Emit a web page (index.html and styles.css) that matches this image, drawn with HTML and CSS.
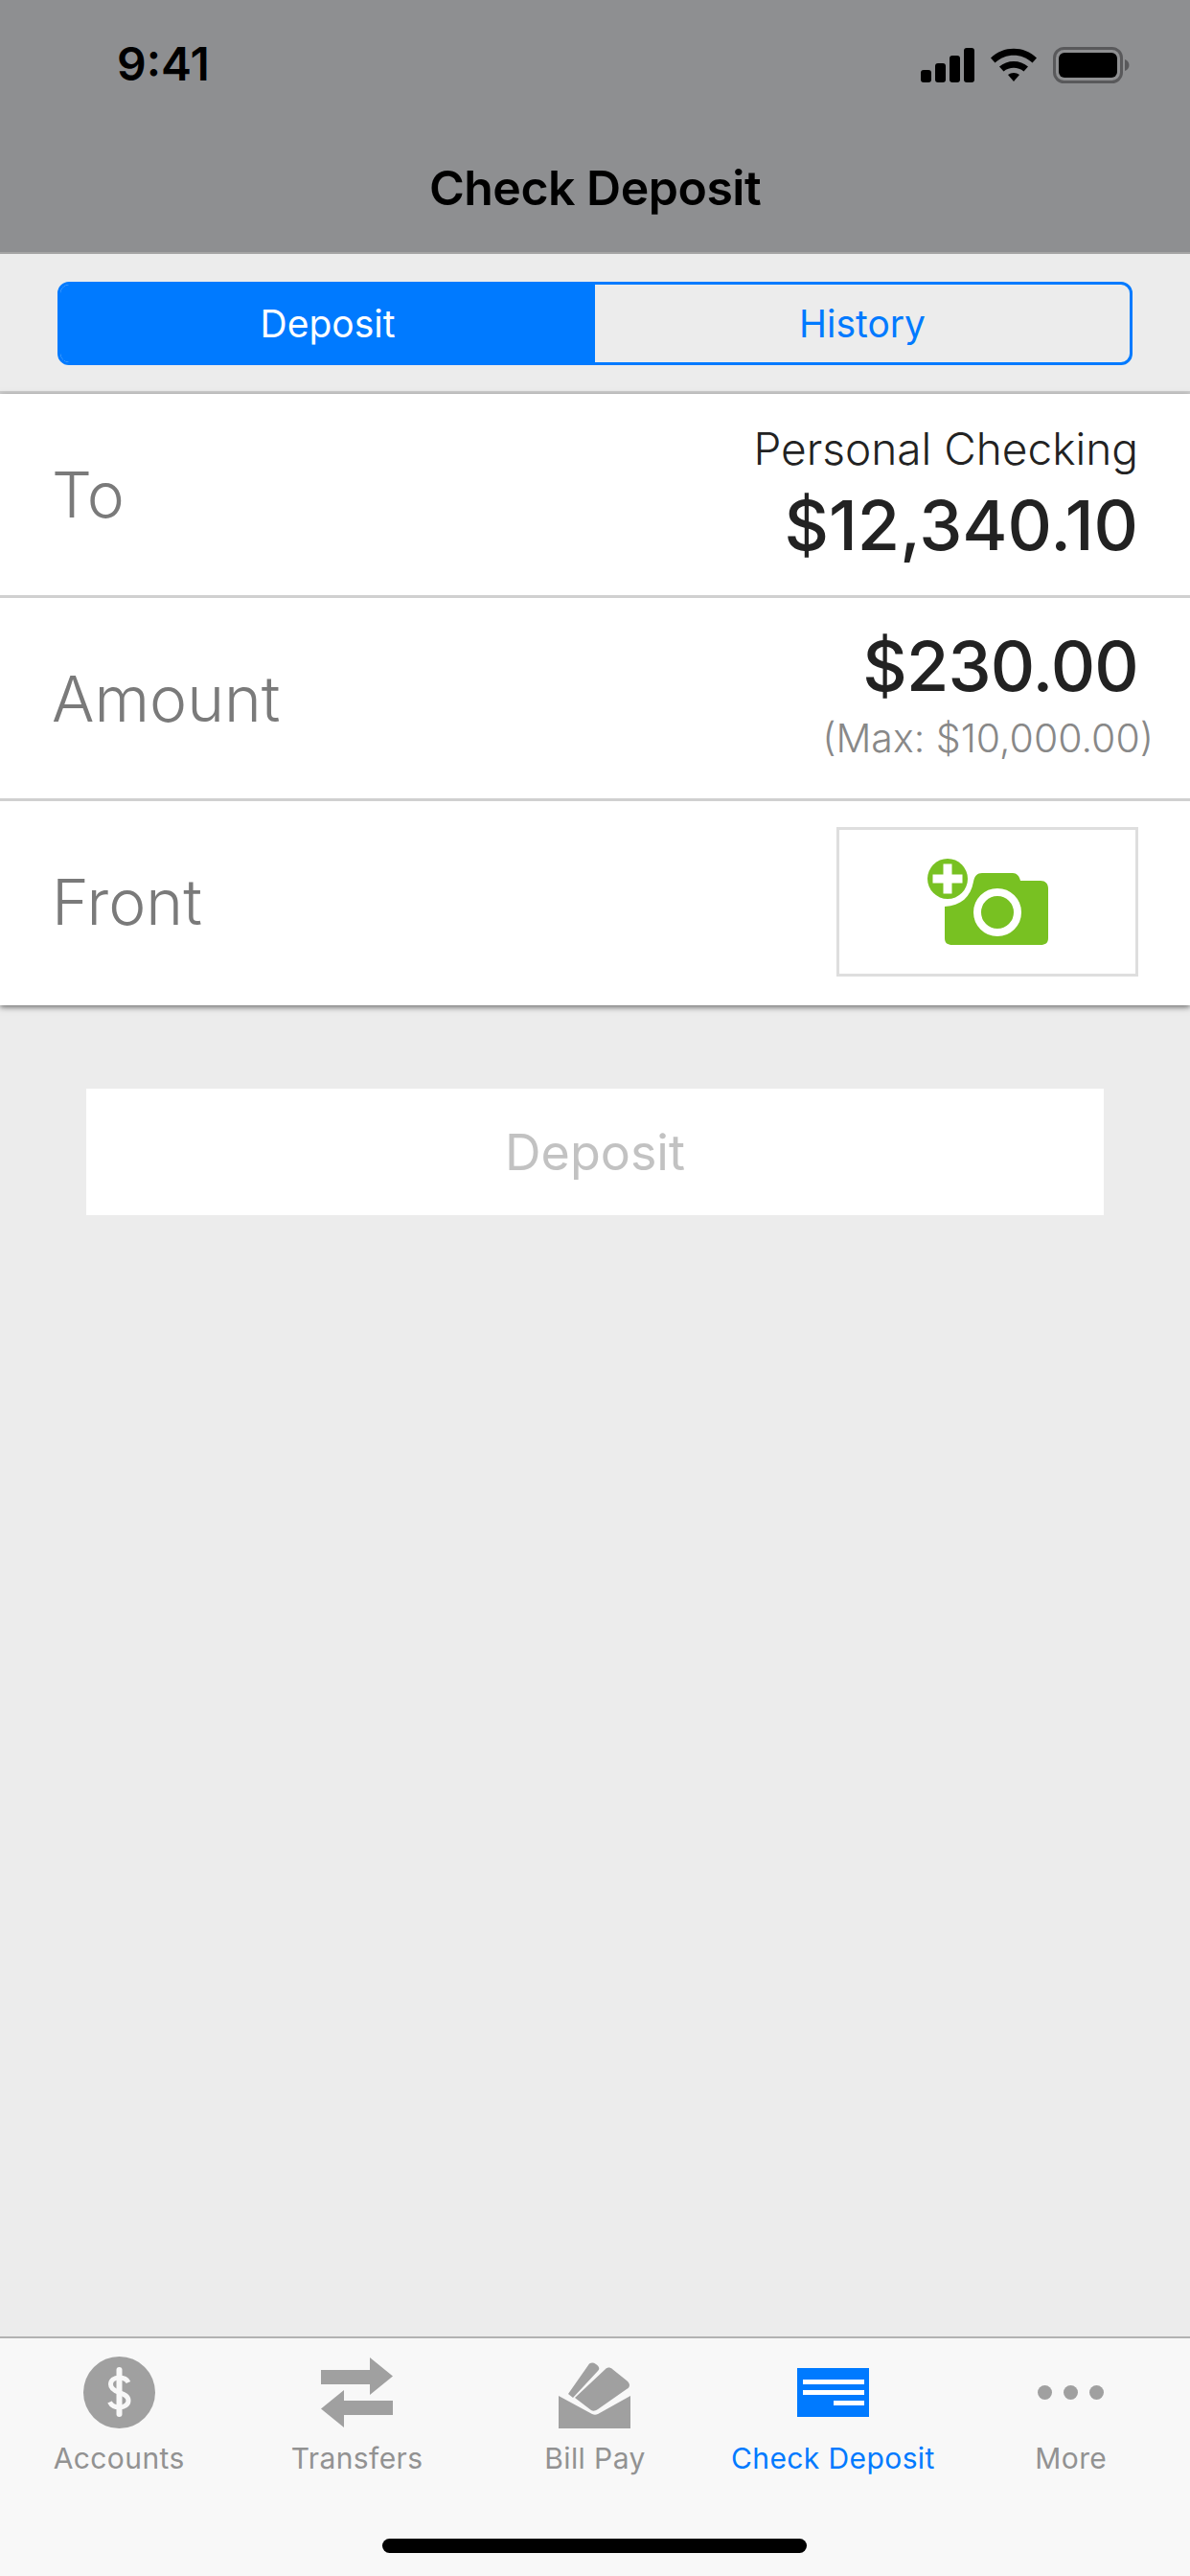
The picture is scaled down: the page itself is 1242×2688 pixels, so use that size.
FILE: index.html
```html
<!DOCTYPE html>
<html>
<head>
    <title>Check Deposit</title>
    <link rel="stylesheet" href="styles.css">
</head>
<body>
    <header class="top-bar">
        <div class="status-bar">
            <span class="clock">9:41</span>
            <div class="status-icons">
                <svg class="signal" width="56" height="36" viewBox="0 0 56 36">
                    <rect x="0" y="23" width="11" height="13" rx="3"/>
                    <rect x="15" y="16" width="11" height="20" rx="3"/>
                    <rect x="30" y="8" width="11" height="28" rx="3"/>
                    <rect x="45" y="0" width="11" height="36" rx="3"/>
                </svg>
                <svg class="wifi" width="50" height="36" viewBox="0 0 50 36">
                    <path d="M1 10.5 C14 -2.5 36 -2.5 49 10.5 L44.5 15.5 C33.5 5 16.5 5 5.500 15.500 Z"/>
                    <path d="M10 19.500 C18 12 32 12 40 19.500 L35.500 24.500 C29.500 19.500 20.500 19.500 14.500 24.500 Z"/>
                    <path d="M19 28 C22.500 25.300 27.500 25.300 31 28 L25 35 Z"/>
                </svg>
                <svg class="battery" width="80" height="38" viewBox="0 0 80 38">
                    <rect x="1.500" y="1.500" width="70" height="35" rx="10" fill="none" stroke="#59595b" stroke-width="3"/>
                    <rect x="6" y="6" width="61" height="26" rx="6"/>
                    <path d="M75 13 C78 14 79.500 16.500 79.500 19 C79.500 21.500 78 24 75 25 Z" fill="#59595b"/>
                </svg>
            </div>
        </div>
        <h1 class="title">Check Deposit</h1>
    </header>

    <div class="segment-wrap">
        <div class="segment">
            <div class="segment-item active">Deposit</div>
            <div class="segment-item">History</div>
        </div>
    </div>

    <section class="form-card">
        <div class="form-row">
            <span class="row-label">To</span>
            <div class="row-value">
                <div class="account-name">Personal Checking</div>
                <div class="money">$12,340.10</div>
            </div>
        </div>
        <div class="form-row">
            <span class="row-label">Amount</span>
            <div class="row-value">
                <div class="money tight">$230.00</div>
                <div class="max-note">(Max: $10,000.00)</div>
            </div>
        </div>
        <div class="form-row">
            <span class="row-label">Front</span>
            <div class="photo-box">
                <svg width="126" height="90" viewBox="-15 -4 126 90">
                    <path d="M3 46 C20 45 30 36 33 20 C34 14 37 11 42 11 H74 C78 11 81 14 82 19 H103 C108 19 111 22 111 27 V79 C111 84 108 86 103 86 H11 C6 86 3 84 3 79 Z" fill="#78c122"/>
                    <circle cx="58" cy="52" r="21" fill="#78c122" stroke="#fff" stroke-width="8"/>
                    <circle cx="6" cy="17" r="21" fill="#78c122"/>
                    <path d="M1.500 12.500 V1.500 H10.500 V12.500 H21.500 V21.500 H10.500 V32.500 H1.500 V21.500 H-9.500 V12.500 Z" fill="#fff"/>
                </svg>
            </div>
        </div>
    </section>

    <button class="deposit-btn" type="button">Deposit</button>

    <nav class="tab-bar">
        <div class="tab">
            <svg width="75" height="75" viewBox="0 0 75 75">
                <circle cx="37.500" cy="37.500" r="37.500" fill="#a0a0a0"/>
                <path d="M47 27 C45 23 42 22 37.500 22 C32 22 28.500 25 28.500 29 C28.500 33 32 35.500 37.500 37.500 C43 39.500 47 41.500 47 46 C47 50 43 53 37.500 53 C33 53 29.500 51.500 27.500 47.500" fill="none" stroke="#f8f8f8" stroke-width="5"/>
                <path d="M37.500 14 V60" stroke="#f8f8f8" stroke-width="6" stroke-linecap="round"/>
            </svg>
            <span>Accounts</span>
        </div>
        <div class="tab">
            <svg width="75" height="75" viewBox="0 0 75 75">
                <path d="M0 14 H51 V1 L75 20.500 L51 40 V29 H0 Z" fill="#a0a0a0"/>
                <path d="M75 46 H24 V35 L0 54.500 L24 74 V61 H75 Z" fill="#a0a0a0"/>
            </svg>
            <span>Transfers</span>
        </div>
        <div class="tab">
            <svg width="75" height="75" viewBox="12 8 75 75">
                <path d="M12 49 L47 68 C49 69 51 69 53 68 L87 49 V83 H12 Z" fill="#a0a0a0"/>
                <path d="M29 51 L61 21 C63 19 66 19 68 21 L83 33 C87 36 87 40 83 42 L53 63 C50 65 48 65 46 64 Z" fill="#a0a0a0"/>
                <path d="M22 47 L43 17 C45 14 48 14 51 16 C55 19 55 21 53 23 L27 51 Z" fill="#a0a0a0"/>
            </svg>
            <span>Bill Pay</span>
        </div>
        <div class="tab current">
            <svg width="75" height="75" viewBox="0 0 75 75">
                <rect x="0" y="12" width="75" height="51" fill="#007aff"/>
                <rect x="6" y="24" width="64" height="5" fill="#fff"/>
                <rect x="6" y="35" width="64" height="5" fill="#fff"/>
                <rect x="38" y="46" width="32" height="5" fill="#fff"/>
            </svg>
            <span>Check Deposit</span>
        </div>
        <div class="tab">
            <svg width="75" height="75" viewBox="0 0 75 75">
                <circle cx="10.500" cy="37.500" r="7.500" fill="#a0a0a0"/>
                <circle cx="37.500" cy="37.500" r="7.500" fill="#a0a0a0"/>
                <circle cx="64.500" cy="37.500" r="7.500" fill="#a0a0a0"/>
            </svg>
            <span>More</span>
        </div>
        <div class="home-bar"></div>
    </nav>
</body>
</html>
```

FILE: styles.css
```css
* {
    box-sizing: border-box;
}

body {
    font-family: Inter, 'Liberation Sans', sans-serif;
    background: #ececec;
    margin: 0;
    width: 1242px;
    height: 2688px;
    display: flex;
    flex-direction: column;
    overflow: hidden;
}

.top-bar {
    height: 265px;
    background: #8e8f91;
    border-bottom: 2px solid #a5a5a5;
    color: #000;
}

.status-bar {
    height: 166px;
    padding: 42px 63px 0 122px;
    display: flex;
    justify-content: space-between;
    align-items: flex-start;
}

.clock {
    font-size: 48px;
    font-weight: 600;
    line-height: 50px;
}

.status-icons {
    display: flex;
    align-items: center;
    gap: 16px;
    margin-top: 7px;
}

.title {
    margin: 0;
    text-align: center;
    font-size: 50px;
    font-weight: 600;
    line-height: 60px;
    letter-spacing: -0.5px;
}

.segment-wrap {
    height: 146px;
    padding: 29px 60px 0 60px;
    border-bottom: 3px solid #d0d0d0;
}

.segment {
    display: flex;
    height: 87px;
    border: 3px solid #007aff;
    border-radius: 12px;
    overflow: hidden;
}

.segment-item {
    flex: 1;
    display: flex;
    justify-content: center;
    align-items: center;
    font-size: 39px;
    color: #007aff;
}

.segment-item.active {
    background: #007aff;
    color: #fff;
}

.form-card {
    background: #fff;
    box-shadow: 0 2px 6px rgba(0, 0, 0, 0.55);
}

.form-row {
    height: 213px;
    padding: 0 54px;
    display: flex;
    justify-content: space-between;
    align-items: center;
    border-bottom: 3px solid #d0d0d0;
}

.form-row:nth-child(2) {
    height: 212px;
}

.form-row:last-child {
    border-bottom-color: transparent;
}

.row-label {
    font-size: 66px;
    font-weight: 300;
    color: #7a7a7a;
}

.row-value {
    text-align: right;
}

.account-name {
    font-size: 46px;
    font-weight: 300;
    line-height: 56px;
    margin-bottom: 8px;
    color: #222;
}

.money {
    font-size: 72px;
    font-weight: 500;
    line-height: 88px;
    color: #222;
}

.money.tight {
    letter-spacing: -0.8px;
}

.max-note {
    font-size: 41px;
    font-weight: 300;
    line-height: 50px;
    margin: 6px -16px 12px 0;
    color: #888;
}

.photo-box {
    width: 315px;
    height: 156px;
    border: 3px solid #dedede;
    display: flex;
    justify-content: center;
    align-items: center;
}

.deposit-btn {
    display: block;
    width: 1062px;
    height: 132px;
    margin: 87px 0 0 90px;
    background: #fff;
    border: none;
    font-family: inherit;
    font-size: 52px;
    color: #c2c2c2;
}

.tab-bar {
    margin-top: auto;
    height: 250px;
    background: #f8f8f8;
    border-top: 2px solid #b2b2b2;
    padding: 19px 0 0 0;
    display: flex;
    justify-content: space-around;
    position: relative;
}

.tab {
    width: 248px;
    display: flex;
    flex-direction: column;
    align-items: center;
    gap: 13px;
    font-size: 30px;
    letter-spacing: 0.4px;
    color: #929292;
}

.tab.current {
    color: #007aff;
}

.home-bar {
    position: absolute;
    left: 399px;
    bottom: 24px;
    width: 443px;
    height: 15px;
    border-radius: 8px;
    background: #000;
}
```
